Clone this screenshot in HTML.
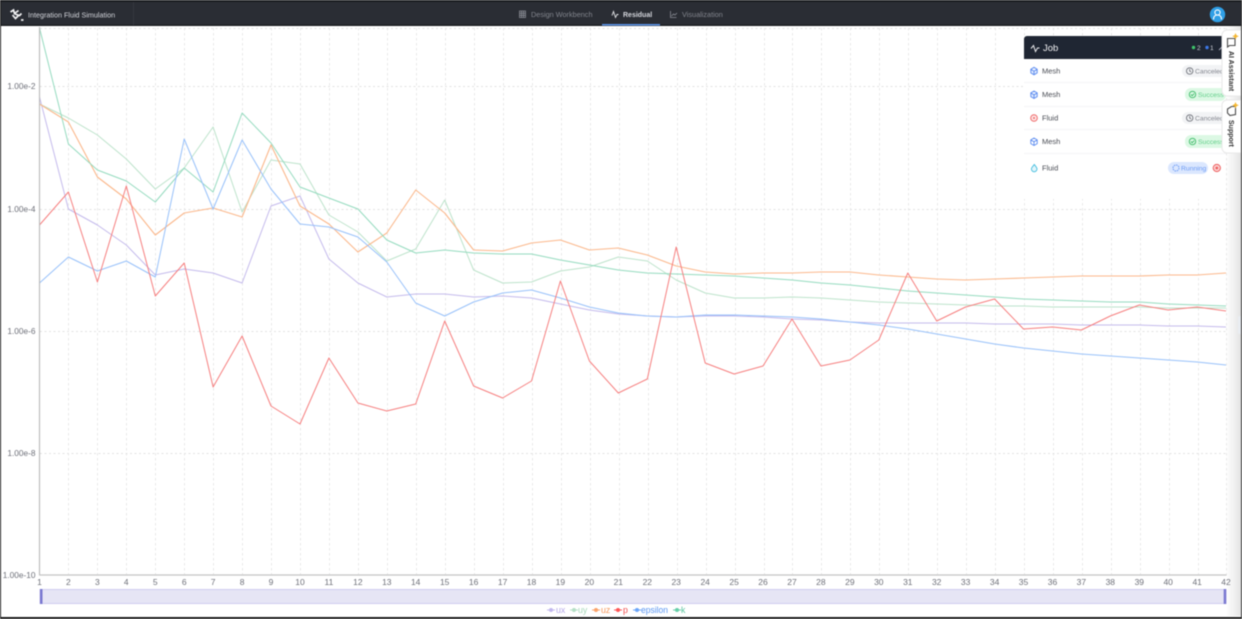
<!DOCTYPE html>
<html><head><meta charset="utf-8"><style>
html,body{margin:0;padding:0;width:1242px;height:619px;overflow:hidden;background:#fff}
#wrap{position:relative;width:1242px;height:619px;overflow:hidden;filter:blur(.4px);font-family:"Liberation Sans",sans-serif}
svg{position:absolute;left:0;top:0}
text{font-family:"Liberation Sans",sans-serif}
</style></head><body><div id="wrap">
<svg width="1242" height="619" viewBox="0 0 1242 619">
<rect width="1242" height="619" fill="#fff"/>
<defs><linearGradient id="sh" x1="0" x2="1"><stop offset="0" stop-color="#fff"/><stop offset="1" stop-color="#e4e4e4"/></linearGradient></defs>
<rect x="1226" y="26" width="15" height="590" fill="url(#sh)"/>
<g stroke="#e9e9e9" stroke-width="1" stroke-dasharray="2.500 2.500" fill="none">
<path d="M68.5 28V575M97.5 28V575M126.5 28V575M155.5 28V575M184.5 28V575M213.5 28V575M242.5 28V575M271.5 28V575M300.5 28V575M329.5 28V575M358.5 28V575M387.5 28V575M416.5 28V575M445.5 28V575M474.5 28V575M503.5 28V575M532.5 28V575M561.5 28V575M590.5 28V575M619.5 28V575M648.5 28V575M677.5 28V575M706.5 28V575M735.5 28V575M764.5 28V575M792.5 28V575M821.5 28V575M850.5 28V575M879.5 28V575M908.5 28V575M937.5 28V575M966.5 28V575M995.5 28V575M1024.5 28V575M1053.5 28V575M1082.5 28V575M1111.5 28V575M1140.5 28V575M1169.5 28V575M1198.5 28V575M1226.5 28V575"/>
</g>
<g stroke="#e2e2e2" stroke-width="1" stroke-dasharray="2 2.500" fill="none">
<path d="M40 28.500H1226M40 86.500H1226M40 209.500H1226M40 331.500H1226M40 453.500H1226"/>
</g>
<g fill="none" stroke-linejoin="round">
<polyline stroke="#c4baec" stroke-width="1" points="39.5,97 68.4,209 97.4,225 126.3,245 155.3,275 184.2,269 213.1,273 242.1,283 271,206 300,196 328.9,259 357.9,283 386.8,297 415.7,294 444.7,294 473.6,297 502.6,296 531.5,298 560.4,304 589.4,310 618.3,314 647.3,316 676.2,317 705.2,316 734.1,316 763,317 792,319 820.9,320 849.9,322 878.8,323 907.8,323 936.7,323 965.6,323 994.6,324 1023.5,324 1052.5,324 1081.4,325 1110.3,325 1139.3,325 1168.2,326 1197.2,326 1226,327"/>
<polyline stroke="#bde3cb" stroke-width="1" points="39.5,104 68.4,118 97.4,135 126.3,159 155.3,189 184.2,168 213.1,127 242.1,212 271,160 300,164 328.9,215 357.9,232 386.8,261 415.7,249 444.7,200 473.6,270 502.6,283 531.5,282 560.4,271 589.4,267 618.3,257 647.3,261 676.2,280 705.2,293 734.1,298 763,298 792,297 820.9,298 849.9,300 878.8,302 907.8,303 936.7,304 965.6,305 994.6,306 1023.5,306 1052.5,307 1081.4,307 1110.3,307 1139.3,307 1168.2,308 1197.2,308 1226,308"/>
<polyline stroke="#fbb88c" stroke-width="1.100" points="39.5,104 68.4,122 97.4,177 126.3,199 155.3,235 184.2,213 213.1,208 242.1,217 271,145 300,206 328.9,224 357.9,252 386.8,233 415.7,190 444.7,213 473.6,250 502.6,251 531.5,243 560.4,240 589.4,250 618.3,248 647.3,255 676.2,266 705.2,272 734.1,274 763,273 792,273 820.9,272 849.9,272 878.8,275 907.8,277 936.7,279 965.6,280 994.6,279 1023.5,278 1052.5,277 1081.4,276 1110.3,276 1139.3,276 1168.2,275 1197.2,275 1226,273"/>
<polyline stroke="#95dbbf" stroke-width="1" points="39.5,28 68.4,144 97.4,170 126.3,181 155.3,202 184.2,168 213.1,192 242.1,113 271,143 300,187 328.9,198 357.9,209 386.8,240 415.7,253 444.7,250 473.6,253 502.6,254 531.5,254 560.4,260 589.4,265 618.3,270 647.3,273 676.2,274 705.2,275 734.1,276 763,278 792,280 820.9,283 849.9,285 878.8,288 907.8,291 936.7,293 965.6,295 994.6,297 1023.5,299 1052.5,300 1081.4,301 1110.3,302 1139.3,302 1168.2,304 1197.2,305 1226,306"/>
<polyline stroke="#98c1fa" stroke-width="1" points="39.5,283 68.4,257 97.4,271 126.3,261 155.3,277 184.2,139 213.1,209 242.1,140 271,189 300,224 328.9,227 357.9,237 386.8,262 415.7,303 444.7,316 473.6,302 502.6,293 531.5,290 560.4,298 589.4,307 618.3,313 647.3,316 676.2,317 705.2,315 734.1,315 763,316 792,317 820.9,319 849.9,322 878.8,325 907.8,329 936.7,334 965.6,339 994.6,344 1023.5,348 1052.5,351 1081.4,354 1110.3,356 1139.3,358 1168.2,360 1197.2,362 1226,365"/>
<polyline stroke="#f67f7f" stroke-width="1" points="39.5,225 68.4,192 97.4,282 126.3,186 155.3,296 184.2,263 213.1,387 242.1,336 271,406 300,424 328.9,358 357.9,403 386.8,411 415.7,404 444.7,321 473.6,386 502.6,398 531.5,381 560.4,281 589.4,361 618.3,393 647.3,379 676.2,247 705.2,363 734.1,374 763,366 792,319 820.9,366 849.9,360 878.8,340 907.8,273 936.7,321 965.6,307 994.6,299 1023.5,329 1052.5,327 1081.4,330 1110.3,316 1139.3,305 1168.2,310 1197.2,307 1226,311"/>
</g>
<path d="M39.5 27V575" stroke="#bdbdbd" stroke-width="1.200"/>
<path d="M39 575H1226.5" stroke="#c4c4c4" stroke-width="1.300"/>
<g fill="#6e7079" font-size="8.300" text-anchor="end">
<text x="35.500" y="89">1.00e-2</text><text x="35.500" y="212">1.00e-4</text><text x="35.500" y="334">1.00e-6</text><text x="35.500" y="456">1.00e-8</text><text x="35.500" y="578">1.00e-10</text>
</g>
<g fill="#6e7079" font-size="8.500" text-anchor="middle">
<text x="39.5" y="585">1</text><text x="68.4" y="585">2</text><text x="97.4" y="585">3</text><text x="126.3" y="585">4</text><text x="155.3" y="585">5</text><text x="184.2" y="585">6</text><text x="213.1" y="585">7</text><text x="242.1" y="585">8</text><text x="271" y="585">9</text><text x="300" y="585">10</text><text x="328.9" y="585">11</text><text x="357.9" y="585">12</text><text x="386.8" y="585">13</text><text x="415.7" y="585">14</text><text x="444.7" y="585">15</text><text x="473.6" y="585">16</text><text x="502.6" y="585">17</text><text x="531.5" y="585">18</text><text x="560.4" y="585">19</text><text x="589.4" y="585">20</text><text x="618.3" y="585">21</text><text x="647.3" y="585">22</text><text x="676.2" y="585">23</text><text x="705.2" y="585">24</text><text x="734.1" y="585">25</text><text x="763" y="585">26</text><text x="792" y="585">27</text><text x="820.9" y="585">28</text><text x="849.9" y="585">29</text><text x="878.8" y="585">30</text><text x="907.8" y="585">31</text><text x="936.7" y="585">32</text><text x="965.6" y="585">33</text><text x="994.6" y="585">34</text><text x="1023.5" y="585">35</text><text x="1052.5" y="585">36</text><text x="1081.4" y="585">37</text><text x="1110.3" y="585">38</text><text x="1139.3" y="585">39</text><text x="1168.2" y="585">40</text><text x="1197.2" y="585">41</text><text x="1226" y="585">42</text>
</g>
<rect x="40" y="589.5" width="1186" height="14" fill="#e6e5f5" stroke="#cfcdf0" stroke-width="1"/>
<rect x="40" y="589" width="2.5" height="15" fill="#7a78d0"/><rect x="1223.7" y="589" width="2.5" height="15" fill="#7a78d0"/>
<g font-size="8.800">
<path d="M547 610h8" stroke="#c2b8ee"/><circle cx="551" cy="610" r="2" fill="#c2b8ee"/><text x="556" y="613" fill="#b5a9e8">ux</text>
<path d="M570 610h8" stroke="#b5e0c6"/><circle cx="574" cy="610" r="2" fill="#b5e0c6"/><text x="578" y="613" fill="#a8d9bb">uy</text>
<path d="M592 610h8" stroke="#fba36a"/><circle cx="596" cy="610" r="2" fill="#fba36a"/><text x="601" y="613" fill="#f79a5e">uz</text>
<path d="M614 610h8" stroke="#f55"/><circle cx="618" cy="610" r="2" fill="#f55"/><text x="623" y="613" fill="#f04e4e">p</text>
<path d="M633 610h8" stroke="#6aa5fa"/><circle cx="637" cy="610" r="2" fill="#6aa5fa"/><text x="641" y="613" fill="#5a96f2" textLength="27" lengthAdjust="spacingAndGlyphs">epsilon</text>
<path d="M673 610h8" stroke="#66cfa8"/><circle cx="677" cy="610" r="2" fill="#66cfa8"/><text x="681" y="613" fill="#5cc6a0">k</text>
</g>
<!-- job panel -->
<rect x="1024" y="59" width="202" height="140" fill="#fff"/>
<path d="M1024 39a3 3 0 0 1 3-3H1226V59H1024Z" fill="#1f2633"/>
<path d="M1031 48.500l2.500-3 2 6 2-3.500h2" fill="none" stroke="#e8e8ea" stroke-width="1"/>
<text x="1043" y="51" fill="#f0f0f2" font-size="9.500">Job</text>
<circle cx="1193.500" cy="47.500" r="1.700" fill="#3fc56b"/><text x="1197" y="50" fill="#cfd2d8" font-size="6.500">2</text>
<circle cx="1207" cy="47.500" r="1.700" fill="#3c78e8"/><text x="1210" y="50" fill="#cfd2d8" font-size="6.500">1</text>
<path d="M1219 50l3-3" stroke="#aab" stroke-width="1"/>
<path d="M1024 82.500H1226M1024 106.500H1226M1024 129.500H1226M1024 153.500H1226" stroke="#f4f4f6"/>
<g font-size="7.500" fill="#4a4d55">
<text x="1042" y="73.500">Mesh</text><text x="1042" y="97">Mesh</text><text x="1042" y="120.500">Fluid</text><text x="1042" y="144">Mesh</text><text x="1042" y="170.500">Fluid</text>
</g>
<g fill="none" stroke="#5b8bf0" stroke-width=".9">
<path d="M1034 67.300l3.200 1.900v3.700l-3.200 1.900-3.200-1.900v-3.700ZM1030.800 69.200l3.200 1.900 3.200-1.900M1034 71.100v3.700" fill="#dfe9fd"/>
<path d="M1034 91l3.200 1.900v3.700l-3.200 1.900-3.200-1.900v-3.700ZM1030.800 92.900l3.200 1.900 3.200-1.900M1034 94.800v3.700" fill="#dfe9fd"/>
<path d="M1034 138l3.200 1.900v3.700l-3.200 1.900-3.200-1.900v-3.700ZM1030.800 139.900l3.200 1.900 3.200-1.900M1034 141.800v3.700"/>
</g>
<circle cx="1034" cy="118" r="3.300" fill="#fde8e8" stroke="#ef6a6a"/><circle cx="1034" cy="118" r="1" fill="#ef6a6a"/>
<path d="M1034.300 164.500c1.500 2 2.700 3 2.700 4.500a2.800 2.800 0 0 1-5.600 0c0-1.500 1.400-2.500 2.900-4.500Z" fill="#e2f5fb" stroke="#43bdde" stroke-width=".9"/>
<rect x="1182" y="65" width="44" height="12" rx="6" fill="#f2f3f5"/>
<rect x="1182" y="112" width="44" height="12" rx="6" fill="#f2f3f5"/>
<rect x="1185" y="88" width="41" height="13" rx="6" fill="#dcf8e4"/>
<rect x="1185" y="135" width="41" height="13" rx="6" fill="#dcf8e4"/>
<rect x="1168" y="162" width="40" height="12" rx="6" fill="#dbe7fe"/>
<g fill="none" stroke="#6d7078" stroke-width=".9">
<circle cx="1189.700" cy="71" r="3.200"/><path d="M1189.700 69v2l1.300 1"/>
<circle cx="1189.700" cy="118" r="3.200"/><path d="M1189.700 116v2l1.300 1"/>
</g>
<g fill="none" stroke="#3dbb68" stroke-width=".9">
<circle cx="1192.500" cy="94.500" r="3.200"/><path d="M1191 94.500l1.200 1.200 2-2.200"/>
<circle cx="1192.500" cy="141.500" r="3.200"/><path d="M1191 141.500l1.200 1.200 2-2.200"/>
</g>
<circle cx="1176" cy="168" r="3" fill="none" stroke="#6f9df5" stroke-width="1" stroke-dasharray="1.500 .8"/>
<g font-size="6.800">
<text x="1195" y="73.300" fill="#84878f">Canceled</text><text x="1195" y="120.300" fill="#84878f">Canceled</text>
<text x="1198" y="96.800" fill="#63cf8a">Success</text><text x="1198" y="143.800" fill="#63cf8a">Success</text>
<text x="1181" y="170.300" fill="#6f9df5">Running</text>
</g>
<circle cx="1216.800" cy="168" r="3.600" fill="#fbd5d5" stroke="#ee5e5e"/><circle cx="1216.800" cy="168" r="1.400" fill="#ee5e5e"/>
<!-- side tabs -->
<rect x="1222" y="30" width="24" height="66" rx="5" fill="#fff" stroke="#e8e8e8"/>
<rect x="1222" y="100" width="24" height="53" rx="5" fill="#fff" stroke="#e8e8e8"/>
<path d="M1227.500 38.500h7.500v7h-5.500l-2 1.500Z" fill="#fff" stroke="#4c4c4c" stroke-width="1.100"/>
<path d="M1227.500 109l4-2.500h4v8l-5.500 1-2.500-2.500Z" fill="#fff" stroke="#4c4c4c" stroke-width="1.100"/>
<path d="M1235.500 33l1 2.300 2.300 1-2.300 1-1 2.300-1-2.300-2.300-1 2.300-1Z" fill="#f5b62e"/>
<path d="M1235.500 102l1 2.300 2.300 1-2.300 1-1 2.300-1-2.300-2.300-1 2.300-1Z" fill="#f5b62e"/>
<g font-size="7" font-weight="bold" fill="#333">
<text transform="translate(1229 51) rotate(90)">AI Assistant</text>
<text transform="translate(1229 120) rotate(90)">Support</text>
</g>
<rect x="1238" y="316" width="4" height="18" rx="2" fill="#e9edf2"/>
<!-- header -->
<rect width="1242" height="26" fill="#2a2d34"/>
<rect width="1242" height="2" fill="#1a1c20"/>
<rect y="24.500" width="1242" height="1.500" fill="#1c1e22"/>
<path d="M133.500 2V25" stroke="#34373e"/>
<path d="M10.500 12l3-2 1 3.500 4-3M12.500 15l3 3.500 3.500-3.500M15 14l4.500 1.500 2-2M21 20h2.500" fill="none" stroke="#f2f2f4" stroke-width="1.700"/>
<text x="28" y="17.500" font-size="7.200" fill="#d4d6dc">Integration Fluid Simulation</text>
<g fill="none" stroke="#8a8d95" stroke-width=".8">
<rect x="519.500" y="11" width="6" height="6.500"/><path d="M519.500 13.200h6M519.500 15.300h6M521.500 11v6.500M523.500 11v6.500"/>
<path d="M670.500 11v6.500h6M671.500 16l2-2 1.500 1 2-2"/>
</g>
<path d="M612 15.500l1.500-4 2 6 1.500-3h1.500" fill="none" stroke="#e4e5e8" stroke-width=".9"/>
<text x="531" y="17" font-size="7.300" fill="#82858d">Design Workbench</text>
<text x="623" y="17" font-size="7" font-weight="bold" fill="#d4d6dc">Residual</text>
<text x="682" y="17" font-size="7.300" fill="#82858d">Visualization</text>
<rect x="602" y="24" width="58" height="1.500" fill="#5a94ea"/>
<circle cx="1217.500" cy="14.500" r="7.700" fill="#2f9fe6"/>
<circle cx="1217.500" cy="12.500" r="2.600" fill="none" stroke="#fff" stroke-width="1.100"/>
<path d="M1213.500 19.500c0-3 1.500-4.500 4-4.500s4 1.500 4 4.500" fill="none" stroke="#fff" stroke-width="1.100"/>
<!-- frame -->
<rect x="0" y="0" width="1" height="619" fill="#1a1a1a"/>
<rect x="1241" y="0" width="1" height="619" fill="#2a2a2a"/>
<rect x="0" y="617" width="1242" height="2" fill="#1a1a1a"/>
</svg>
</div></body></html>
